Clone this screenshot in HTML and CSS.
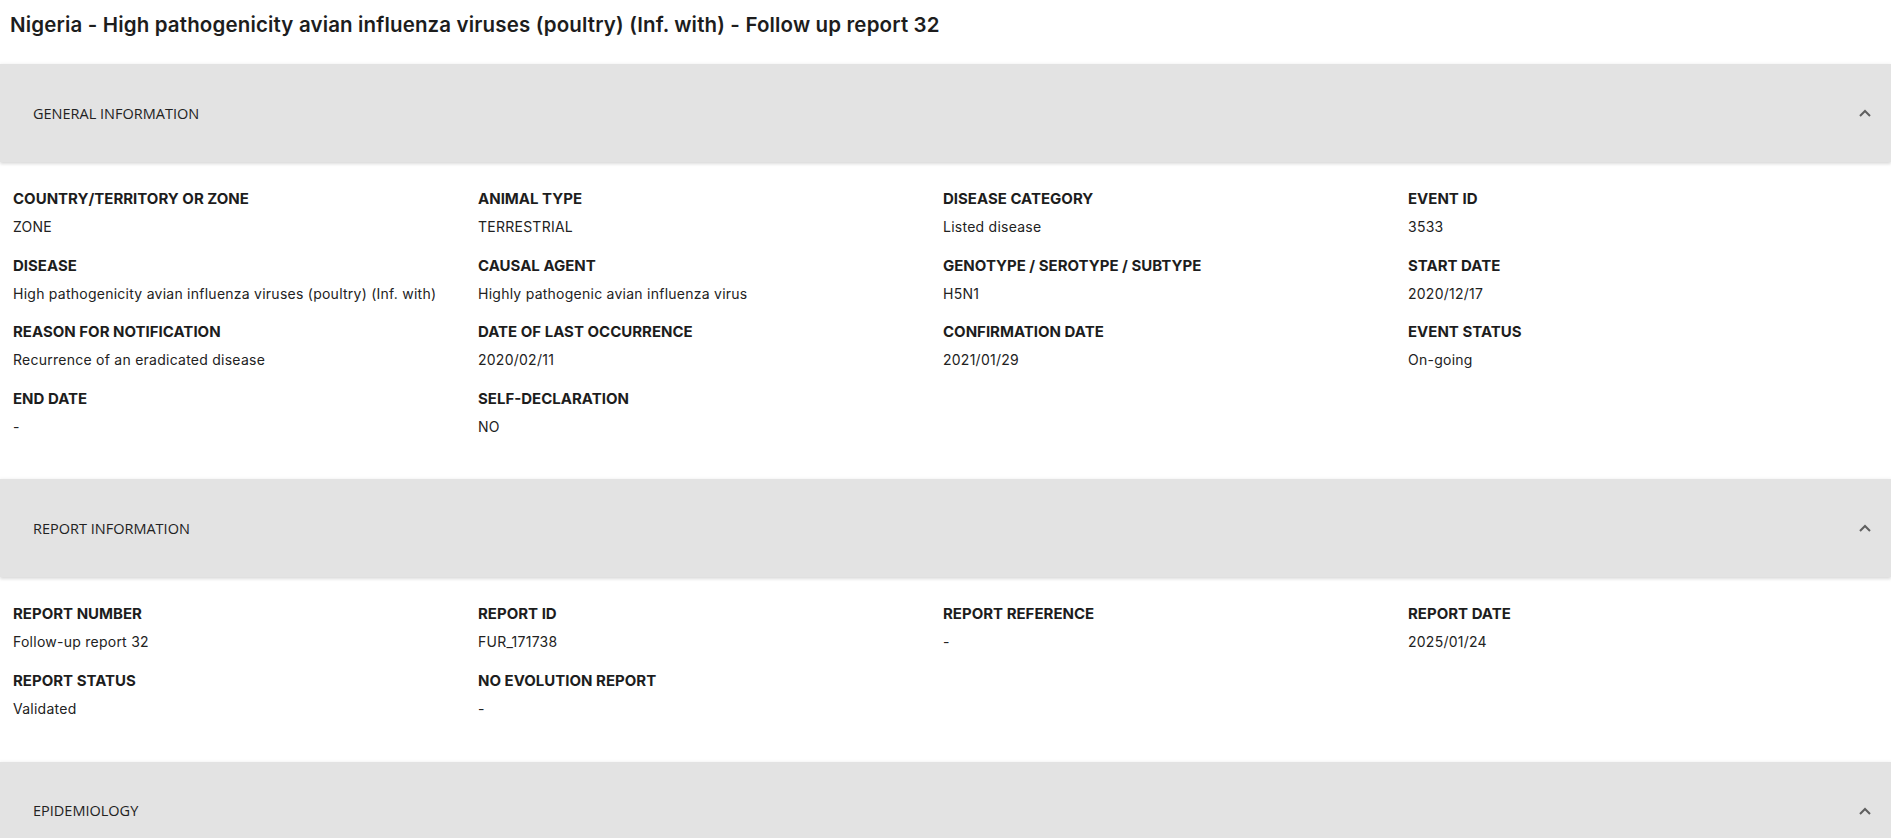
FILE: index.html
```html
<!DOCTYPE html>
<html>
<head>
<meta charset="utf-8">
<link rel="stylesheet" href="styles.css">
</head>
<body>
<h1 class="title">Nigeria - High pathogenicity avian influenza viruses (poultry) (Inf. with) - Follow up report 32</h1>

<section class="panel">
  <div class="panel-header">
    <span class="panel-title">GENERAL INFORMATION</span>
    <svg class="chevron" width="12" height="8" viewBox="0 0 12 8"><path d="M1 7 L6 2 L11 7" fill="none" stroke="#5f5f5f" stroke-width="2"/></svg>
  </div>
  <div class="panel-body">
    <div class="field"><div class="label">COUNTRY/TERRITORY OR ZONE</div><div class="value">ZONE</div></div>
    <div class="field"><div class="label">ANIMAL TYPE</div><div class="value">TERRESTRIAL</div></div>
    <div class="field"><div class="label">DISEASE CATEGORY</div><div class="value">Listed disease</div></div>
    <div class="field"><div class="label">EVENT ID</div><div class="value">3533</div></div>
    <div class="field"><div class="label">DISEASE</div><div class="value">High pathogenicity avian influenza viruses (poultry) (Inf. with)</div></div>
    <div class="field"><div class="label">CAUSAL AGENT</div><div class="value">Highly pathogenic avian influenza virus</div></div>
    <div class="field"><div class="label">GENOTYPE / SEROTYPE / SUBTYPE</div><div class="value">H5N1</div></div>
    <div class="field"><div class="label">START DATE</div><div class="value">2020/12/17</div></div>
    <div class="field"><div class="label">REASON FOR NOTIFICATION</div><div class="value">Recurrence of an eradicated disease</div></div>
    <div class="field"><div class="label">DATE OF LAST OCCURRENCE</div><div class="value">2020/02/11</div></div>
    <div class="field"><div class="label">CONFIRMATION DATE</div><div class="value">2021/01/29</div></div>
    <div class="field"><div class="label">EVENT STATUS</div><div class="value">On-going</div></div>
    <div class="field"><div class="label">END DATE</div><div class="value">-</div></div>
    <div class="field"><div class="label">SELF-DECLARATION</div><div class="value">NO</div></div>
  </div>
</section>

<section class="panel">
  <div class="panel-header">
    <span class="panel-title">REPORT INFORMATION</span>
    <svg class="chevron" width="12" height="8" viewBox="0 0 12 8"><path d="M1 7 L6 2 L11 7" fill="none" stroke="#5f5f5f" stroke-width="2"/></svg>
  </div>
  <div class="panel-body">
    <div class="field"><div class="label">REPORT NUMBER</div><div class="value">Follow-up report 32</div></div>
    <div class="field"><div class="label">REPORT ID</div><div class="value">FUR_171738</div></div>
    <div class="field"><div class="label">REPORT REFERENCE</div><div class="value">-</div></div>
    <div class="field"><div class="label">REPORT DATE</div><div class="value">2025/01/24</div></div>
    <div class="field"><div class="label">REPORT STATUS</div><div class="value">Validated</div></div>
    <div class="field"><div class="label">NO EVOLUTION REPORT</div><div class="value">-</div></div>
  </div>
</section>

<section class="panel">
  <div class="panel-header">
    <span class="panel-title">EPIDEMIOLOGY</span>
    <svg class="chevron" width="12" height="8" viewBox="0 0 12 8"><path d="M1 7 L6 2 L11 7" fill="none" stroke="#5f5f5f" stroke-width="2"/></svg>
  </div>
</section>
</body>
</html>
```
FILE: styles.css
```css
html, body {
  margin: 0;
  padding: 0;
  background: #ffffff;
  color: #1d1d1d;
  font-family: Inter, "Noto Sans", sans-serif;
}

.title {
  margin: 0;
  padding: 13px 0 0 10px;
  height: 64px;
  box-sizing: border-box;
  font-size: 20.5px;
  line-height: 24px;
  letter-spacing: 0.15px;
  font-weight: 600;
  color: #1d1d1d;
}

.panel {
  background: #fff;
}

.panel-header {
  height: 98px;
  background: #e3e3e3;
  display: flex;
  align-items: center;
  justify-content: space-between;
  padding: 0 20px 0 33px;
  box-shadow: 0 2px 3px rgba(0, 0, 0, 0.14), 0 -1px 3px rgba(0, 0, 0, 0.04);
  position: relative;
}

.panel-title {
  font-family: "Open Sans", "Noto Sans", sans-serif;
  font-size: 14.5px;
  color: #222;
}

.chevron {
  display: block;
}

.panel-body {
  display: grid;
  grid-template-columns: repeat(4, 465px);
  padding: 27px 0 24px 13px;
}

.field {
  margin-bottom: 18.6px;
}

.label {
  font-size: 15px;
  line-height: 20px;
  font-weight: 700;
  color: #1d1d1d;
}

.value {
  margin-top: 8px;
  font-size: 14px;
  line-height: 20px;
  letter-spacing: 0.25px;
  color: #222;
}
```
